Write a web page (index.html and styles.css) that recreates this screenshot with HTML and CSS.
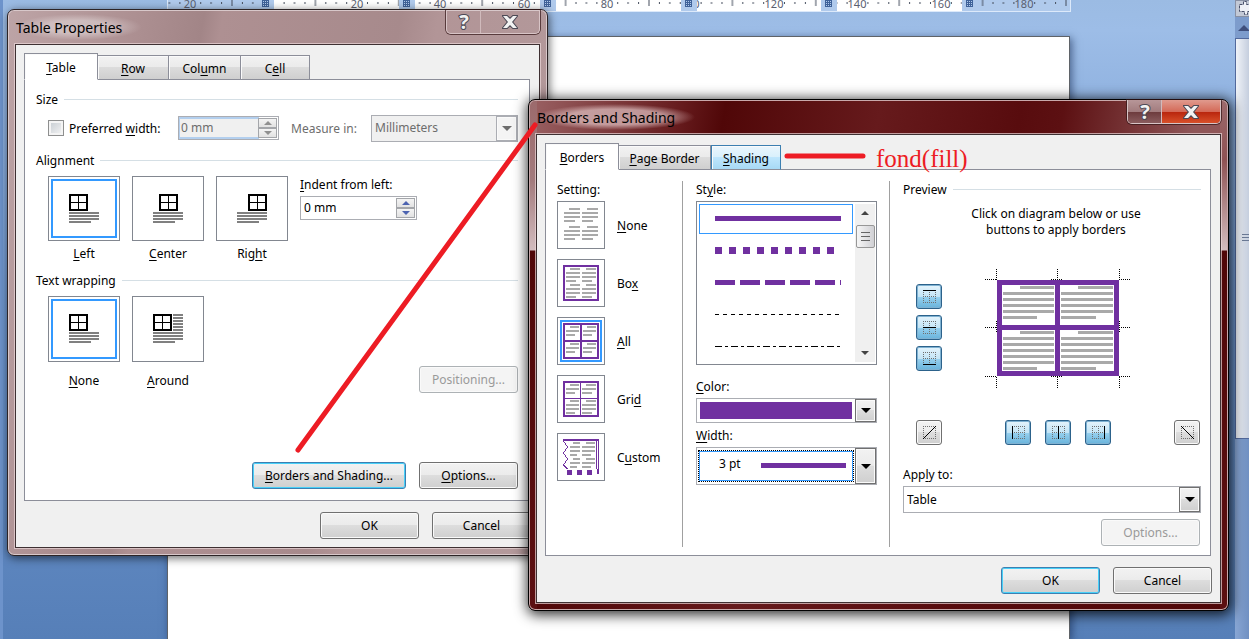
FILE: index.html
```
<!DOCTYPE html>
<html lang="en">
<head>
    <meta charset="UTF-8">
    <meta name="viewport" content="width=device-width, initial-scale=1.0">
    <title>Borders and Shading</title>
    <link rel="stylesheet" href="styles.css">
</head>
<body>
    <main class="workspace">
        <svg class="ruler" width="904" height="12" aria-hidden="true">
            <defs>
                <pattern id="ticks" x="23.3" y="0" width="83.4" height="12" patternUnits="userSpaceOnUse">
                    <path d="M10.4 2v2M20.8 2v2M31.3 2v2M52.1 2v2M62.5 2v2M73 2v2M41.7 0v6" stroke="#444c5c"/>
                </pattern>
                <g id="marker">
                    <rect x="-8" width="16" height="12" fill="#b0caec"/>
                    <path d="M-3.500 0v7M-1.500 0v7M.5 0v7M2.500 0v7M-4 .5h7M-4 2.500h7M-4 4.500h7M-4 6.500h7" stroke="#3f6299"/>
                </g>
            </defs>
            <rect width="904" height="12" fill="#b0caec"/>
            <rect x="107" width="688" height="12" fill="#fff"/>
            <rect width="904" height="12" fill="url(#ticks)"/>
            <g class="ruler-numbers">
                <text x="23" y="8">20</text>
                <text x="190" y="8">20</text>
                <text x="273" y="8">40</text>
                <text x="357" y="8">60</text>
                <text x="440" y="8">80</text>
                <text x="523" y="8">100</text>
                <text x="607" y="8">120</text>
                <text x="690" y="8">140</text>
                <text x="774" y="8">160</text>
                <text x="857" y="8">180</text>
            </g>
            <use href="#marker" x="99"/>
            <use href="#marker" x="240"/>
            <use href="#marker" x="381"/>
            <use href="#marker" x="522"/>
            <use href="#marker" x="662"/>
            <use href="#marker" x="803"/>
            <path d="M0 11.500h904M.5 0v12M903.500 0v12" stroke="#dce9fa"/>
        </svg>
        <div class="page"></div>
    </main>

    <aside class="scrollbar" aria-hidden="true">
        <div class="browse">
            <svg width="14" height="16"><path d="M3.500 3.500h4v-3h3v3h4v7h-3v3h-3v-3h-5z" fill="#eef0f6" stroke="#48506a" stroke-dasharray="3 1"/></svg>
        </div>
        <div class="scroll-up">
            <svg width="14" height="21"><path d="M3 14l6-6 5 5v1z" fill="#3f4f7c"/></svg>
        </div>
        <div class="scroll-thumb">
            <svg width="14" height="14"><path d="M6 2.500h8M6 5.500h8M6 8.500h8" stroke="#6b7a96"/></svg>
        </div>
    </aside>

    <!-- Table Properties -->
    <section class="window window-properties" aria-label="Table Properties">
        <div class="titlebar">
            <h2>Table Properties</h2>
            <div class="caption-buttons">
                <button type="button" class="help" aria-label="Help"><svg width="20" height="22"><text x="10" y="18">?</text></svg></button>
                <button type="button" class="close" aria-label="Close"><svg width="16" height="14"><path d="M1 1h4l3 3 3-3h4l-5 6 5 6h-4l-3-3-3 3H1l5-6z"/></svg></button>
            </div>
        </div>
        <div class="client">
            <div class="tabs" role="tablist">
                <button type="button" role="tab" class="tab tab-table active"><u>T</u>able</button>
                <button type="button" role="tab" class="tab tab-row"><u>R</u>ow</button>
                <button type="button" role="tab" class="tab tab-column">Col<u>u</u>mn</button>
                <button type="button" role="tab" class="tab tab-cell">C<u>e</u>ll</button>
            </div>
            <div class="panel panel-properties">
                <h3 class="legend">Size</h3>
                <div class="size-row">
                    <label class="check"><input type="checkbox"><span>Preferred <u>w</u>idth:</span></label>
                    <div class="spinner disabled">
                        <input type="text" value="0 mm" aria-label="Preferred width" disabled>
                        <div class="spin-buttons">
                            <button type="button" aria-label="Increase width" disabled><i class="up"></i></button>
                            <button type="button" aria-label="Decrease width" disabled><i class="down"></i></button>
                        </div>
                    </div>
                    <label class="measure-label" for="measure">Measure in:</label>
                    <div class="combo disabled measure">
                        <select id="measure" disabled><option>Millimeters</option></select>
                        <span class="drop"></span>
                    </div>
                </div>

                <h3 class="legend">Alignment</h3>
                <div class="tile-row">
                    <label class="tile">
                        <input type="radio" name="align" checked>
                        <svg width="72" height="66">
                            <path class="ink" d="M22 19h17v15h-17z"/><path class="hair" d="M30.500 19v15M22 26.500h17"/>
                            <path class="text" d="M21 37h30M21 40h30M21 43h30M21 46h22"/>
                        </svg>
                        <span><u>L</u>eft</span>
                    </label>
                    <label class="tile">
                        <input type="radio" name="align">
                        <svg width="72" height="66">
                            <path class="ink" d="M28 19h17v15h-17z"/><path class="hair" d="M36.500 19v15M28 26.500h17"/>
                            <path class="text" d="M21 37h30M21 40h30M21 43h30M21 46h22"/>
                        </svg>
                        <span><u>C</u>enter</span>
                    </label>
                    <label class="tile">
                        <input type="radio" name="align">
                        <svg width="72" height="66">
                            <path class="ink" d="M33 19h17v15h-17z"/><path class="hair" d="M41.500 19v15M33 26.500h17"/>
                            <path class="text" d="M21 37h30M21 40h30M21 43h30M21 46h22"/>
                        </svg>
                        <span>Rig<u>h</u>t</span>
                    </label>
                    <div class="indent">
                        <label for="indent"><u>I</u>ndent from left:</label>
                        <div class="spinner">
                            <input type="text" id="indent" value="0 mm">
                            <div class="spin-buttons">
                                <button type="button" aria-label="Increase indent"><i class="up"></i></button>
                                <button type="button" aria-label="Decrease indent"><i class="down"></i></button>
                            </div>
                        </div>
                    </div>
                </div>

                <h3 class="legend">Text wrapping</h3>
                <div class="tile-row wrapping">
                    <label class="tile">
                        <input type="radio" name="wrap" checked>
                        <svg width="72" height="66">
                            <path class="ink" d="M22 19h17v15h-17z"/><path class="hair" d="M30.500 19v15M22 26.500h17"/>
                            <path class="text" d="M21 37h30M21 40h30M21 43h30M21 46h22"/>
                        </svg>
                        <span><u>N</u>one</span>
                    </label>
                    <label class="tile">
                        <input type="radio" name="wrap">
                        <svg width="72" height="66">
                            <path class="ink" d="M22 19h17v15h-17z"/><path class="hair" d="M30.500 19v15M22 26.500h17"/>
                            <path class="text" d="M41 19h10M41 22h10M41 25h10M41 28h10M41 31h10M41 34h10M21 37h30M21 40h30M21 43h30M21 46h22"/>
                        </svg>
                        <span><u>A</u>round</span>
                    </label>
                    <button type="button" class="btn push-right" disabled>Positioning...</button>
                </div>

                <div class="buttons panel-buttons">
                    <button type="button" class="btn btn-default btn-wide"><u>B</u>orders and Shading...</button>
                    <button type="button" class="btn"><u>O</u>ptions...</button>
                </div>
            </div>
            <div class="buttons dialog-buttons">
                <button type="button" class="btn">OK</button>
                <button type="button" class="btn">Cancel</button>
            </div>
        </div>
    </section>

    <!-- Borders and Shading -->
    <section class="window window-borders" aria-label="Borders and Shading">
        <div class="titlebar">
            <h2>Borders and Shading</h2>
            <div class="caption-buttons">
                <button type="button" class="help" aria-label="Help"><svg width="20" height="22"><text x="10" y="18">?</text></svg></button>
                <button type="button" class="close" aria-label="Close"><svg width="16" height="14"><path d="M1 1h4l3 3 3-3h4l-5 6 5 6h-4l-3-3-3 3H1l5-6z"/></svg></button>
            </div>
        </div>
        <div class="client">
            <div class="tabs" role="tablist">
                <button type="button" role="tab" class="tab tab-borders active"><u>B</u>orders</button>
                <button type="button" role="tab" class="tab tab-page"><u>P</u>age Border</button>
                <button type="button" role="tab" class="tab tab-shading hot"><u>S</u>hading</button>
            </div>
            <div class="panel panel-borders">
                <div class="column settings">
                    <h3>Setting:</h3>
                    <label class="setting">
                        <input type="radio" name="setting">
                        <svg width="48" height="48">
                            <path class="grey" d="M12 8h11M30 8h11M7 12h16M25 12h16M7 16h16M25 16h16M7 20h11M25 20h11M12 26h11M30 26h11M7 30h16M25 30h16M7 34h16M25 34h16M7 38h11M25 38h11"/>
                        </svg>
                        <span><u>N</u>one</span>
                    </label>
                    <label class="setting">
                        <input type="radio" name="setting">
                        <svg width="48" height="48">
                            <path class="grey" d="M13 10h10M29 10h10M9 14h14M25 14h14M9 18h14M25 18h14M9 22h10M25 22h10M13 26h10M29 26h10M9 30h14M25 30h14M9 34h14M25 34h14M9 38h10M25 38h10"/>
                            <path class="purple" d="M7 7h34v34H7z"/>
                        </svg>
                        <span>Bo<u>x</u></span>
                    </label>
                    <label class="setting">
                        <input type="radio" name="setting" checked>
                        <svg width="48" height="48">
                            <path class="grey" d="M13 10h9M30 10h9M9 14h13M26 14h13M9 18h9M26 18h9M13 27h9M30 27h9M9 31h13M26 31h13M9 35h9M26 35h9"/>
                            <path class="purple" d="M7 7h34v34H7zM24 7v34M7 24h34"/>
                        </svg>
                        <span><u>A</u>ll</span>
                    </label>
                    <label class="setting">
                        <input type="radio" name="setting">
                        <svg width="48" height="48">
                            <path class="grey" d="M13 10h9M29 10h10M9 14h13M25 14h14M9 18h9M25 18h10M13 26h9M29 26h10M9 30h13M25 30h14M9 34h13M25 34h14M9 38h9M25 38h10"/>
                            <path class="purple" d="M7 7h34v34H7z"/>
                            <path class="purple thin" d="M23.500 7v34M7 23.500h34"/>
                        </svg>
                        <span>Gri<u>d</u></span>
                    </label>
                    <label class="setting">
                        <input type="radio" name="setting">
                        <svg width="48" height="48">
                            <path class="grey" d="M16 10h7M29 10h9M13 14h10M25 14h13M13 18h10M25 18h13M13 22h7M25 22h9M16 26h7M29 26h9M13 30h10M25 30h13M13 34h7M25 34h9"/>
                            <path class="purple" d="M6 7h36M41 36v5"/>
                            <path class="purple thin" d="M39.500 7v29M41.500 7v30M6.500 8l4 6-4 6 4 6-4 6 4 4"/>
                            <path d="M10 37h5v5h-5zM20 37h5v5h-5zM30 37h5v5h-5z" fill="#7030a0"/>
                        </svg>
                        <span>C<u>u</u>stom</span>
                    </label>
                </div>

                <div class="column styles">
                    <h3>St<u>y</u>le:</h3>
                    <div class="style-box">
                        <ul class="style-list" role="listbox" aria-label="Style">
                            <li role="option" aria-selected="true"><svg width="126" height="8"><path d="M0 3.500h126" stroke="#7030a0" stroke-width="5"/></svg></li>
                            <li role="option"><svg width="126" height="8"><path d="M0 3.500h126" stroke="#7030a0" stroke-width="7" stroke-dasharray="7 7"/></svg></li>
                            <li role="option"><svg width="126" height="8"><path d="M0 3.500h126" stroke="#7030a0" stroke-width="5" stroke-dasharray="20 5"/></svg></li>
                            <li role="option"><svg width="126" height="8"><path d="M0 3.500h125" stroke="#000" stroke-dasharray="4 4"/></svg></li>
                            <li role="option"><svg width="126" height="8"><path d="M0 3.500h125" stroke="#000" stroke-dasharray="7 3 3 3"/></svg></li>
                        </ul>
                        <div class="list-scroll">
                            <i class="up"></i>
                            <span class="list-thumb"></span>
                            <i class="down"></i>
                        </div>
                    </div>
                    <label class="field-label" for="color"><u>C</u>olor:</label>
                    <div class="combo color">
                        <select id="color"><option>Purple</option></select>
                        <span class="drop"></span>
                    </div>
                    <label class="field-label width-label" for="width"><u>W</u>idth:</label>
                    <div class="combo width">
                        <select id="width"><option>3 pt</option></select>
                        <span class="drop"></span>
                    </div>
                </div>

                <div class="column preview">
                    <h3 class="legend">Preview</h3>
                    <p class="hint">Click on diagram below or use<br>buttons to apply borders</p>
                    <div class="diagram-row">
                        <div class="edge-buttons">
                            <button type="button" class="edge on" aria-label="Top border"><svg width="13" height="13"><path class="dots" d="M0 6.500h13M0 12.500h13M.5 0v13M6.500 0v13M12.500 0v13"/><path class="edge-line" d="M0 .5h13"/></svg></button>
                            <button type="button" class="edge on" aria-label="Inside horizontal border"><svg width="13" height="13"><path class="dots" d="M0 .5h13M0 12.500h13M.5 0v13M6.500 0v13M12.500 0v13"/><path class="edge-line" d="M0 6.500h13"/></svg></button>
                            <button type="button" class="edge on" aria-label="Bottom border"><svg width="13" height="13"><path class="dots" d="M0 .5h13M0 6.500h13M.5 0v13M6.500 0v13M12.500 0v13"/><path class="edge-line" d="M0 12.500h13"/></svg></button>
                        </div>
                        <svg class="diagram" width="146" height="120">
                            <path class="grey3" d="M35 18.500h34M18 24.500h51M18 30.500h51M18 36.500h51M18 42.500h51M18 48.500h34M93 18.500h35M76 24.500h52M76 30.500h52M76 36.500h52M76 42.500h52M76 48.500h35"/>
                            <path class="grey3" d="M35 63.500h34M18 69.500h51M18 75.500h51M18 81.500h51M18 87.500h51M18 93.500h51M18 99.500h34M93 63.500h35M76 69.500h52M76 75.500h52M76 81.500h52M76 87.500h52M76 93.500h52M76 99.500h35"/>
                            <path class="frame" d="M14.500 13.500h117v91h-117zM72.500 13.500v91M14.500 58.500h117"/>
                            <path class="guides" d="M0 10.500h12M66 10.500h12M134 10.500h12M0 58.500h12M134 58.500h12M0 107.500h12M66 107.500h12M134 107.500h12M11.500 0v11M72.500 0v11M134.500 0v11M11.500 52v11M134.500 52v11M11.500 108v12M72.500 108v12M134.500 108v12"/>
                        </svg>
                    </div>
                    <div class="bottom-edges">
                        <button type="button" class="edge" aria-label="Diagonal up"><svg width="13" height="13"><path class="dots" d="M0 .5h13M0 12.500h13M.5 0v13M12.500 0v13"/><path class="diagonal" d="M0 13L13 0"/></svg></button>
                        <div class="edge-group">
                            <button type="button" class="edge on" aria-label="Left border"><svg width="13" height="13"><path class="dots" d="M0 .5h13M0 6.500h13M0 12.500h13M6.500 0v13M12.500 0v13"/><path class="edge-line" d="M.5 0v13"/></svg></button>
                            <button type="button" class="edge on" aria-label="Inside vertical border"><svg width="13" height="13"><path class="dots" d="M0 .5h13M0 6.500h13M0 12.500h13M.5 0v13M12.500 0v13"/><path class="edge-line" d="M6.500 0v13"/></svg></button>
                            <button type="button" class="edge on" aria-label="Right border"><svg width="13" height="13"><path class="dots" d="M0 .5h13M0 6.500h13M0 12.500h13M.5 0v13M6.500 0v13"/><path class="edge-line" d="M12.500 0v13"/></svg></button>
                        </div>
                        <button type="button" class="edge" aria-label="Diagonal down"><svg width="13" height="13"><path class="dots" d="M0 .5h13M0 12.500h13M.5 0v13M12.500 0v13"/><path class="diagonal" d="M0 0l13 13"/></svg></button>
                    </div>
                    <label class="apply-label" for="apply">App<u>l</u>y to:</label>
                    <div class="combo apply">
                        <select id="apply"><option>Table</option></select>
                        <span class="drop"></span>
                    </div>
                    <button type="button" class="btn preview-options" disabled>Options...</button>
                </div>
            </div>
            <div class="buttons dialog-buttons">
                <button type="button" class="btn btn-default">OK</button>
                <button type="button" class="btn">Cancel</button>
            </div>
        </div>
    </section>

    <!-- red pen notes over the windows -->
    <svg class="pen" width="900" height="480" aria-hidden="true">
        <path d="M298 450L535 125M787 156h76"/>
    </svg>
    <p class="note">fond(fill)</p>
</body>
</html>
```

FILE: styles.css
```
:root {
    --face: #f0f0f0;
    --edge: #828790;
    --field-edge: #abadb3;
    --purple: #7030a0;
    --select: #3399ff;
    --red: #ed1c24;
}

* {
    margin: 0;
    padding: 0;
    box-sizing: border-box;
}

body {
    position: relative;
    display: flex;
    min-height: 100vh;
    overflow: hidden;
    font-family: "Noto Sans", Tahoma, sans-serif;
    font-size: 12px;
    line-height: 20px;
    color: #000;
    background: linear-gradient(#9bbbe3, #9dbde7 30px, #6f97cf 300px, #567fb8);
}

button, input, select {
    font: inherit;
    color: inherit;
}

h2, h3 {
    font-weight: normal;
    font-size: 12px;
}

svg {
    display: block;
}

u {
    text-underline-offset: 2px;
}

/* document behind the dialogs */
.workspace {
    flex: 1;
    display: flex;
    flex-direction: column;
    border-left: 3px solid #6d93cb;
}

.ruler {
    margin-left: 164px;
}

.ruler-numbers {
    font-size: 11px;
    fill: #5a6070;
    text-anchor: middle;
}

.page {
    flex: 1;
    margin: 24px 165px 0 164px;
    background: #fff;
    border: 1px solid #5f6368;
    border-bottom: 0;
    box-shadow: 2px 2px 8px rgba(20, 40, 80, 0.6);
}

.scrollbar {
    width: 14px;
    display: flex;
    flex-direction: column;
    background: linear-gradient(90deg, #88a6d4, #7090c2);
}

.browse {
    height: 17px;
    background: #c3c9d6;
    border: 1px solid #8890a4;
    border-right: 0;
    overflow: hidden;
}

.scroll-up {
    height: 21px;
    background: #7d9ccc;
}

.scroll-thumb {
    height: 401px;
    display: flex;
    align-items: center;
    background: linear-gradient(90deg, #f0f3f8, #c5cede);
    border: 1px solid #52699c;
    border-right: 0;
}

/* windows */
.window {
    position: absolute;
    padding: 0 7px 7px;
    border: 1px solid #2c2426;
    border-radius: 7px;
}

.window-properties {
    left: 7px;
    top: 9px;
    width: 541px;
    background: linear-gradient(100deg, #bda4a6, #ad9092 20%, #a28587 31%, #ae9092 34%, #a78a8c 62%, #b29597 68%, #b39a9c);
    box-shadow: inset 0 0 0 1px #d8c8ca, 1px 2px 10px rgba(0, 0, 0, 0.6);
}

.window-borders {
    left: 528px;
    top: 99px;
    width: 701px;
    border-color: #000;
    background:
        linear-gradient(#9c6a6c, #a27a7c 80px, #d2bcbe 150px, #500708 151px, #5c1012) left / 8px 100% no-repeat,
        linear-gradient(#9c6a6c, #8e5254 60px, #d2bcbe 150px, #500708 151px, #5c1012) right / 8px 100% no-repeat,
        linear-gradient(100deg, #9b6264, #651a1c 22%, #500708 28%, #661a1c 50%, #580c0e 70%, #5c1012 76%, #8f5658 95%) top / 100% 35px no-repeat,
        linear-gradient(90deg, #500708, #661a1c 30%, #580c0e 60%, #500708);
    box-shadow: inset 0 0 0 1px #c9a9ab, 1px 2px 13px 2px rgba(0, 0, 0, 0.8);
}

.titlebar {
    display: flex;
    justify-content: space-between;
    height: 34px;
}

.titlebar h2 {
    align-self: center;
    padding: 2px 20px 0 1px;
    font-size: 14px;
    line-height: 24px;
}

.window-properties h2 {
    background: radial-gradient(closest-side, rgba(255, 255, 255, 0.35) 50%, rgba(255, 255, 255, 0));
}

.window-borders h2 {
    background: radial-gradient(closest-side, rgba(225, 195, 196, 0.7) 60%, rgba(225, 195, 196, 0));
}

.caption-buttons {
    display: flex;
    height: 24px;
    border: 1px solid #d8c4c6;
    border-top: 0;
    border-radius: 0 0 5px 5px;
    overflow: hidden;
    box-shadow: 0 0 0 1px rgba(50, 20, 22, 0.7);
}

.caption-buttons button {
    display: flex;
    align-items: center;
    justify-content: center;
    border: 0;
    background: none;
}

.caption-buttons .help {
    width: 34px;
    border-right: 1px solid #d0babc;
}

.caption-buttons .close {
    width: 58px;
}

.window-borders .help {
    background: linear-gradient(#b79698, #a27c7e 50%, #6c3a3c 51%, #8a5c5e);
}

.window-borders .close {
    background: linear-gradient(#e09a8e, #d46a58 50%, #b8240c 51%, #d8502a);
}

.caption-buttons text {
    font-size: 20px;
    font-weight: bold;
    text-anchor: middle;
}

.caption-buttons text,
.caption-buttons path {
    fill: #f2f2f2;
    stroke: #4c4a56;
    stroke-width: 2px;
    paint-order: stroke;
}

.client {
    padding: 8px 9px 8px 8px;
    background: var(--face);
    border: 1px solid #3e3032;
    box-shadow: 0 0 0 1px rgba(235, 215, 217, 0.7);
}

/* tabs */
.tabs {
    display: flex;
    align-items: flex-end;
    height: 27px;
    margin-bottom: -1px;
    position: relative;
}

.tab {
    height: 25px;
    padding-top: 2px;
    border: 1px solid #8c8e99;
    border-left-width: 0;
    background: linear-gradient(#f2f2f2, #ebebeb 48%, #dcdcdc 50%, #cfcfcf);
    box-shadow: inset 1px 1px 0 #fafafa;
}

.tab.active {
    height: 27px;
    border-left-width: 1px;
    border-bottom-color: #fff;
    background: #fff;
}

.tab.hot {
    border-color: #3c7fb1;
    border-left-width: 1px;
    border-bottom-color: #8c8e99;
    background: linear-gradient(#eaf6fd, #d9f0fc 48%, #bee6fd 50%, #a7d9f5);
}

.tab-table { width: 74px; }
.tab-row { width: 71px; }
.tab-column { width: 72px; }
.tab-cell { width: 69px; }
.tab-borders { width: 74px; }
.tab-page { width: 92px; }
.tab-shading { width: 70px; }

.panel {
    background: #fff;
    border: 1px solid #8c8e99;
}

.panel-properties {
    padding: 9px 11px 11px;
}

.panel-borders {
    display: flex;
    padding: 11px 9px 8px 11px;
}

h3 {
    height: 20px;
    padding-top: 2px;
    line-height: 18px;
}

.legend {
    display: flex;
    align-items: center;
    gap: 6px;
}

.legend::after {
    content: "";
    flex: 1;
    height: 1px;
    margin-bottom: 2px;
    background: #d5dfe5;
}

/* buttons */
.buttons {
    display: flex;
    justify-content: flex-end;
    gap: 13px;
}

.dialog-buttons {
    margin: 11px -1px 0 0;
}

.btn {
    width: 99px;
    height: 27px;
    padding-top: 1px;
    border: 1px solid #707070;
    border-radius: 3px;
    background: linear-gradient(#f2f2f2, #ebebeb 48%, #dddddd 50%, #cfcfcf);
    box-shadow: inset 0 0 0 1px #fafafa;
}

.btn-default {
    border-color: #3c7fb1;
    box-shadow: inset 0 0 0 1px #48d0f8;
}

.btn-wide {
    width: 154px;
}

.btn:disabled {
    color: #9a9a9a;
    border-color: #adb2b5;
    background: #f4f4f4;
}

/* fields */
.size-row {
    display: flex;
    align-items: center;
    height: 30px;
    margin: 4px 0 7px 12px;
}

.check {
    display: flex;
    align-items: center;
    gap: 5px;
    width: 130px;
}

.check span,
.measure-label {
    padding-top: 2px;
}

.check input {
    appearance: none;
    width: 16px;
    height: 16px;
    border: 1px solid #8e8f8f;
    background: linear-gradient(135deg, #c4cad0, #f6f6f6);
    box-shadow: inset 0 0 0 2px #f4f4f4;
}

.spinner {
    display: flex;
    width: 117px;
    height: 24px;
    padding: 1px;
    background: #fff;
    border: 1px solid var(--field-edge);
}

.spinner input {
    flex: 1;
    min-width: 0;
    padding-left: 2px;
    border: 0;
    background: none;
}

.spinner.disabled {
    width: 101px;
    color: #6d6d6d;
}

.spinner.disabled input {
    padding-left: 1px;
    background: var(--face);
    border: solid #b3cfee;
    border-width: 1px 0;
    box-shadow: 0 0 0 1px #b3cfee;
}

.spin-buttons {
    display: flex;
    flex-direction: column;
    width: 19px;
    background: #fff;
    position: relative;
}

.spin-buttons button {
    flex: 1;
    display: flex;
    align-items: center;
    justify-content: center;
    border: 1px solid #a4a6aa;
    background: linear-gradient(#f4f4f4, #e2e2e2);
}

.up, .down {
    width: 0;
    height: 0;
    border: 4px solid transparent;
}

.up {
    border-top: 0;
    border-bottom-color: #4c63b0;
}

.down {
    border-bottom: 0;
    border-top-color: #4c63b0;
}

.disabled .up { border-bottom-color: #909090; }
.disabled .down { border-top-color: #909090; }

.measure-label {
    width: 80px;
    margin-left: 12px;
    color: #6d6d6d;
}

.combo {
    position: relative;
}

.combo select {
    display: block;
    appearance: none;
    width: 100%;
    height: 27px;
    padding: 0 3px;
    border: 1px solid var(--field-edge);
    border-radius: 0;
    background: #fff;
    opacity: 1;
}

.drop {
    position: absolute;
    top: 1px;
    right: 1px;
    bottom: 1px;
    width: 21px;
    border: 1px solid #707070;
    background: linear-gradient(#f2f2f2, #ebebeb 48%, #dddddd 50%, #cfcfcf);
    box-shadow: inset 0 0 0 1px #fafafa;
    display: flex;
    align-items: center;
    justify-content: center;
    pointer-events: none;
}

.drop::before {
    content: "";
    border: 5px solid transparent;
    border-top-color: #000;
    border-bottom: 0;
}

.measure {
    flex: 1;
}

.measure select {
    color: #6d6d6d;
    background: var(--face);
}

.disabled .drop {
    border-color: var(--field-edge);
    background: #f4f4f4;
}

.disabled .drop::before {
    border-top-color: #6d6d6d;
}

/* alignment and wrapping tiles */
.tile-row {
    display: flex;
    gap: 12px;
    height: 88px;
    margin: 6px 0 6px 12px;
}

.tile {
    display: flex;
    flex-direction: column;
    gap: 3px;
    align-items: center;
}

.wrapping .tile {
    gap: 9px;
}

.wrapping {
    margin-bottom: 69px;
    height: 97px;
}

.tile input,
.setting input {
    position: absolute;
    opacity: 0;
}

.tile svg,
.setting svg {
    outline: 1px solid var(--edge);
    outline-offset: -1px;
    shape-rendering: crispEdges;
}

input:checked + svg {
    box-shadow: inset 0 0 0 3px #fff, inset 0 0 0 5px var(--select);
}

.ink {
    fill: #fff;
    stroke: #000;
    stroke-width: 2px;
}

.hair {
    stroke: #000;
}

.text {
    stroke: #808080;
    stroke-width: 2px;
}

.indent .spinner {
    margin-top: 1px;
}

.indent label {
    display: block;
    margin-top: -1px;
}

.push-right {
    margin-left: auto;
    align-self: flex-end;
}

/* borders tab */
.column {
    height: 366px;
}

.column h3 {
    margin-top: -2px;
}

.settings {
    width: 126px;
    border-right: 1px solid #a0a0a0;
}

.setting {
    display: flex;
    align-items: center;
    gap: 12px;
    margin: 2px 0 10px;
}

.setting + .setting {
    margin-top: 0;
}

.setting span {
    padding-top: 2px;
}

.grey {
    stroke: #a9a9a9;
    stroke-width: 2px;
}

.purple {
    fill: none;
    stroke: var(--purple);
    stroke-width: 2px;
}

.purple.thin {
    stroke-width: 1px;
}

.styles {
    width: 207px;
    padding: 0 12px 0 13px;
    border-right: 1px solid #a0a0a0;
}

.style-box {
    display: flex;
    height: 164px;
    margin-top: 2px;
    padding: 2px 1px 2px 2px;
    border: 1px solid var(--edge);
}

.style-list {
    flex: 1;
    list-style: none;
}

.style-list li {
    display: flex;
    align-items: center;
    height: 30px;
    padding-left: 15px;
    margin-bottom: 2px;
    border: 1px solid transparent;
}

.style-list li[aria-selected="true"] {
    border-color: var(--select);
}

.style-list svg {
    shape-rendering: crispEdges;
}

.list-scroll {
    display: flex;
    flex-direction: column;
    align-items: center;
    width: 20px;
    margin-left: 2px;
    padding: 7px 0;
    background: #f0f0f0;
}

.list-scroll .up { border-bottom-color: #444; }
.list-scroll .down { border-top-color: #444; margin-top: auto; }

.list-thumb {
    width: 19px;
    height: 23px;
    margin-top: 10px;
    border: 1px solid #979797;
    border-radius: 2px;
    background:
        repeating-linear-gradient(#666 0 1px, transparent 1px 4px) center / 9px 10px no-repeat,
        linear-gradient(90deg, #f6f6f6, #d0d0d4);
}

.field-label {
    display: block;
    margin: 12px 0 1px;
}

.width-label {
    margin: 3px 0 1px;
}

.color select {
    height: 25px;
    color: transparent;
    background: linear-gradient(var(--purple), var(--purple)) 3px 3px / 152px 17px no-repeat #fff;
}

.width select {
    height: 38px;
    padding: 0 22px 4px;
    background: linear-gradient(var(--purple), var(--purple)) 64px 15px / 85px 5px no-repeat #fff;
}

.width::before {
    content: "";
    position: absolute;
    inset: 3px 23px 3px 2px;
    border: 1px dotted #000;
    box-shadow: inset 0 0 0 1px var(--select);
    pointer-events: none;
}

.preview {
    flex: 1;
    padding-left: 13px;
    display: flex;
    flex-direction: column;
}

.hint {
    margin: 7px 0 0 8px;
    line-height: 16px;
    text-align: center;
}

.diagram-row {
    display: flex;
    gap: 43px;
    margin: 31px 0 0 13px;
}

.edge-buttons {
    display: flex;
    flex-direction: column;
    gap: 6px;
    margin-top: 15px;
}

.edge {
    display: flex;
    align-items: center;
    justify-content: center;
    width: 26px;
    height: 25px;
    border: 1px solid #707070;
    border-radius: 3px;
    background: linear-gradient(#f2f2f2, #ebebeb 48%, #dddddd 50%, #cfcfcf);
    box-shadow: inset 0 0 0 1px #fafafa;
}

.edge.on {
    border-color: #2c628b;
    background: linear-gradient(#e5f4fc, #c4e5f6 50%, #98d1ef 51%, #68b3db);
    box-shadow: inset 0 0 0 1px #7fb2d2;
}

.dots {
    stroke: #707070;
    stroke-dasharray: 1 1;
}

.edge-line,
.diagonal {
    stroke: #000;
}

.diagram {
    shape-rendering: crispEdges;
}

.grey3 {
    stroke: #a9a9a9;
    stroke-width: 3px;
}

.frame {
    fill: none;
    stroke: var(--purple);
    stroke-width: 5px;
}

.guides {
    stroke: #000;
    stroke-dasharray: 1 1;
}

.bottom-edges {
    display: flex;
    justify-content: space-between;
    margin: 31px 1px 0 13px;
}

.edge-group {
    display: flex;
    gap: 14px;
}

.apply-label {
    margin-top: 20px;
}

.apply {
    margin: 1px 0 6px;
}

.preview-options {
    align-self: flex-end;
    margin-right: 1px;
    flex-shrink: 0;
}

/* pen notes */
.pen {
    position: absolute;
    left: 0;
    top: 0;
    fill: none;
    stroke: var(--red);
    stroke-width: 5px;
    stroke-linecap: round;
    pointer-events: none;
}

.note {
    position: absolute;
    left: 876px;
    top: 144px;
    font-family: "Liberation Serif", serif;
    font-size: 25px;
    line-height: 30px;
    color: var(--red);
}
```
